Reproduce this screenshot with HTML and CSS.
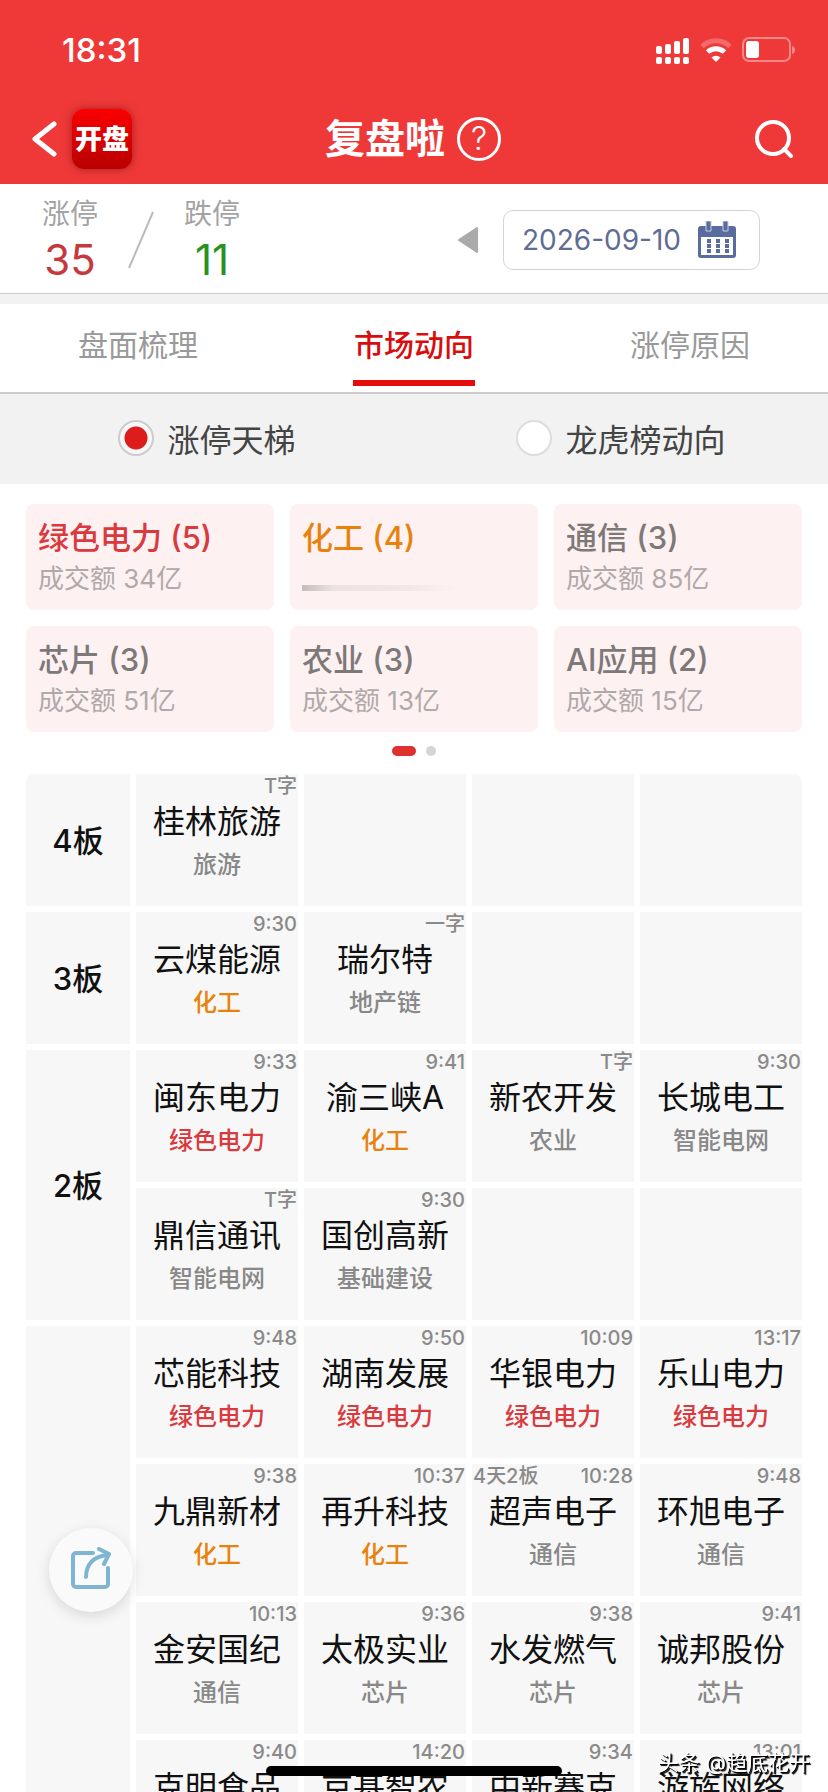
FILE: index.html
```html
<!DOCTYPE html>
<html lang="zh-CN">
<head>
    <meta charset="UTF-8">
    <meta name="viewport" content="width=device-width, initial-scale=1.0">
    <title>复盘啦</title>
    <link rel="stylesheet" href="styles.css">
</head>
<body>

    <header class="top">
        <div class="status-bar">
            <span class="clock">18:31</span>
            <div class="status-icons">
                <svg width="34" height="27" viewBox="0 0 34 27" fill="#fff">
                    <rect x="0" y="9" width="6" height="8" rx="2"/>
                    <rect x="9" y="7" width="6" height="10" rx="2"/>
                    <rect x="18" y="4" width="6" height="13" rx="2"/>
                    <rect x="27" y="1" width="6" height="16" rx="2"/>
                    <rect x="0" y="20" width="6" height="7" rx="2"/>
                    <rect x="9" y="20" width="6" height="7" rx="2"/>
                    <rect x="18" y="20" width="6" height="7" rx="2"/>
                    <rect x="27" y="20" width="6" height="7" rx="2"/>
                </svg>
                <svg width="32" height="25" viewBox="0 0 32 25" fill="none" stroke="#fff" stroke-width="5">
                    <path d="M2 8.500a20 20 0 0 1 28 0" stroke-opacity=".25"/>
                    <path d="M7.500 14a12.500 12.500 0 0 1 17 0"/>
                    <path d="M16 24l-4.500-4.500a7 7 0 0 1 9 0z" fill="#fff" stroke="none"/>
                </svg>
                <svg width="54" height="26" viewBox="0 0 54 26">
                    <rect x="1" y="1" width="47" height="23" rx="6" fill="none" stroke="#fff" stroke-opacity=".4" stroke-width="2"/>
                    <rect x="4" y="4" width="13" height="17" rx="3" fill="#fff"/>
                    <path d="M50 9c4 1 4 7 0 8z" fill="#fff" fill-opacity=".4"/>
                </svg>
            </div>
        </div>
        <div class="nav-bar">
            <div class="nav-left">
                <button class="icon-btn" aria-label="返回">
                    <svg width="26" height="38" viewBox="0 0 26 38" fill="none" stroke="#fff" stroke-width="5" stroke-linecap="round" stroke-linejoin="round">
                        <path d="M22 4L3 19L22 34"/>
                    </svg>
                </button>
                <span class="logo">开盘</span>
            </div>
            <div class="nav-title">
                <h1>复盘啦</h1>
                <button class="help-btn" aria-label="帮助">?</button>
            </div>
            <button class="icon-btn search-btn" aria-label="搜索">
                <svg width="40" height="40" viewBox="0 0 40 40" fill="none" stroke="#fff" stroke-width="4" stroke-linecap="round">
                    <circle cx="19" cy="19" r="16"/>
                    <path d="M30 30l7 7"/>
                </svg>
            </button>
        </div>
    </header>

    <section class="summary">
        <div class="stat up">
            <span class="stat-label">涨停</span>
            <span class="stat-value">35</span>
        </div>
        <svg class="slash" width="26" height="58" viewBox="0 0 26 58" stroke="#bbb" stroke-width="2">
            <path d="M25 1L1 57"/>
        </svg>
        <div class="stat down">
            <span class="stat-label">跌停</span>
            <span class="stat-value">11</span>
        </div>
        <div class="date-picker">
            <button class="icon-btn" aria-label="前一天">
                <svg width="22" height="28" viewBox="0 0 22 28" fill="#aaa" stroke="#aaa" stroke-width="2" stroke-linejoin="round">
                    <path d="M20 2v24L2 14z"/>
                </svg>
            </button>
            <button class="date-btn">
                <span>2026-09-10</span>
                <svg width="40" height="38" viewBox="0 0 40 38">
                    <path d="M4 5h32a3 3 0 0 1 3 3v26a3 3 0 0 1-3 3H4a3 3 0 0 1-3-3V8a3 3 0 0 1 3-3z" fill="#5a6c9e"/>
                    <path d="M4 16h32v18H4z" fill="#fff"/>
                    <path d="M9 0h5v10H9zM26 0h5v10h-5z" fill="#5a6c9e" stroke="#c5cde2" stroke-width="1"/>
                    <path d="M10 18h4v4h-4zM19 18h4v4h-4zM28 18h4v4h-4zM10 23h4v4h-4zM19 23h4v4h-4zM28 23h4v4h-4zM10 28h4v4h-4zM19 28h4v4h-4zM28 28h4v4h-4z" fill="#5a6c9e"/>
                </svg>
            </button>
        </div>
    </section>

    <nav class="tabs">
        <a href="#review" class="tab">盘面梳理</a>
        <a href="#trend" class="tab active">市场动向</a>
        <a href="#reason" class="tab">涨停原因</a>
    </nav>

    <div class="modes">
        <label class="mode"><input type="radio" name="mode" checked>涨停天梯</label>
        <label class="mode"><input type="radio" name="mode">龙虎榜动向</label>
    </div>

    <main class="content">
        <div class="sectors">
            <div class="sector red"><h2>绿色电力 (5)</h2><p>成交额 34亿</p></div>
            <div class="sector orange"><h2>化工 (4)</h2><div class="smudge"></div></div>
            <div class="sector"><h2>通信 (3)</h2><p>成交额 85亿</p></div>
            <div class="sector"><h2>芯片 (3)</h2><p>成交额 51亿</p></div>
            <div class="sector"><h2>农业 (3)</h2><p>成交额 13亿</p></div>
            <div class="sector"><h2>AI应用 (2)</h2><p>成交额 15亿</p></div>
        </div>
        <div class="dots"><span class="dot active"></span><span class="dot"></span></div>

        <table class="ladder">
            <tbody>
                <tr>
                    <th scope="row">4板</th>
                    <td><div class="time">T字</div><div class="name">桂林旅游</div><div class="tag">旅游</div></td>
                    <td></td>
                    <td></td>
                    <td></td>
                </tr>
                <tr>
                    <th scope="row">3板</th>
                    <td><div class="time">9:30</div><div class="name">云煤能源</div><div class="tag orange">化工</div></td>
                    <td><div class="time">一字</div><div class="name">瑞尔特</div><div class="tag">地产链</div></td>
                    <td></td>
                    <td></td>
                </tr>
                <tr>
                    <th scope="row" rowspan="2">2板</th>
                    <td><div class="time">9:33</div><div class="name">闽东电力</div><div class="tag red">绿色电力</div></td>
                    <td><div class="time">9:41</div><div class="name">渝三峡A</div><div class="tag orange">化工</div></td>
                    <td><div class="time">T字</div><div class="name">新农开发</div><div class="tag">农业</div></td>
                    <td><div class="time">9:30</div><div class="name">长城电工</div><div class="tag">智能电网</div></td>
                </tr>
                <tr>
                    <td><div class="time">T字</div><div class="name">鼎信通讯</div><div class="tag">智能电网</div></td>
                    <td><div class="time">9:30</div><div class="name">国创高新</div><div class="tag">基础建设</div></td>
                    <td></td>
                    <td></td>
                </tr>
                <tr>
                    <th scope="row" rowspan="4"></th>
                    <td><div class="time">9:48</div><div class="name">芯能科技</div><div class="tag red">绿色电力</div></td>
                    <td><div class="time">9:50</div><div class="name">湖南发展</div><div class="tag red">绿色电力</div></td>
                    <td><div class="time">10:09</div><div class="name">华银电力</div><div class="tag red">绿色电力</div></td>
                    <td><div class="time">13:17</div><div class="name">乐山电力</div><div class="tag red">绿色电力</div></td>
                </tr>
                <tr>
                    <td><div class="time">9:38</div><div class="name">九鼎新材</div><div class="tag orange">化工</div></td>
                    <td><div class="time">10:37</div><div class="name">再升科技</div><div class="tag orange">化工</div></td>
                    <td><div class="time"><span class="streak">4天2板</span>10:28</div><div class="name">超声电子</div><div class="tag">通信</div></td>
                    <td><div class="time">9:48</div><div class="name">环旭电子</div><div class="tag">通信</div></td>
                </tr>
                <tr>
                    <td><div class="time">10:13</div><div class="name">金安国纪</div><div class="tag">通信</div></td>
                    <td><div class="time">9:36</div><div class="name">太极实业</div><div class="tag">芯片</div></td>
                    <td><div class="time">9:38</div><div class="name">水发燃气</div><div class="tag">芯片</div></td>
                    <td><div class="time">9:41</div><div class="name">诚邦股份</div><div class="tag">芯片</div></td>
                </tr>
                <tr>
                    <td><div class="time">9:40</div><div class="name">克明食品</div></td>
                    <td><div class="time">14:20</div><div class="name">京基智农</div></td>
                    <td><div class="time">9:34</div><div class="name">中新赛克</div></td>
                    <td><div class="time">13:01</div><div class="name">游族网络</div></td>
                </tr>
            </tbody>
        </table>
    </main>

    <button class="share-btn" aria-label="分享">
        <svg width="40" height="42" viewBox="0 0 40 42" fill="none" stroke="#7fb5d2" stroke-width="4" stroke-linecap="round" stroke-linejoin="round">
            <path d="M22 6H5a3 3 0 0 0-3 3v28a3 3 0 0 0 3 3h29a3 3 0 0 0 3-3V21"/>
            <path d="M15 30C15 18 22 9 37 8"/>
            <path d="M28 2l10 5l-5 10"/>
        </svg>
    </button>
    <div class="watermark">头条 @趋底花开</div>
    <div class="home-indicator"></div>

</body>
</html>
```

FILE: styles.css
```css
* {
    box-sizing: border-box;
}

body {
    margin: 0;
    height: 100vh;
    display: flex;
    flex-direction: column;
    overflow: hidden;
    background-color: #fff;
    color: #111;
    font-family: Inter, "Noto Sans CJK SC", sans-serif;
}

h1, h2, p {
    margin: 0;
}

button {
    font-family: inherit;
    cursor: pointer;
}

.icon-btn {
    display: flex;
    padding: 0;
    border: none;
    background: none;
}

.red {
    color: #d93a3e;
}

.orange {
    color: #e8820c;
}

/* Header */
.top {
    flex: none;
    background-color: #ef3939;
    color: #fff;
}

.status-bar {
    display: flex;
    justify-content: space-between;
    align-items: center;
    height: 100px;
    padding: 0 32px 0 62px;
}

.clock {
    font-size: 33px;
    font-weight: 500;
}

.status-icons {
    display: flex;
    align-items: center;
    gap: 10px;
}

.nav-bar {
    display: grid;
    grid-template-columns: 1fr auto 1fr;
    align-items: center;
    height: 84px;
    padding: 0 34px 6px 32px;
}

.nav-left {
    display: flex;
    align-items: center;
    gap: 14px;
}

.logo {
    width: 60px;
    height: 60px;
    border-radius: 12px;
    background: linear-gradient(#fb0000, #b80000);
    box-shadow: 0 0 8px rgba(100, 0, 0, 0.5);
    font-size: 27px;
    font-weight: 900;
    line-height: 62px;
    text-align: center;
}

.nav-title {
    display: flex;
    align-items: center;
    gap: 12px;
}

.nav-title h1 {
    font-size: 40px;
    font-weight: 600;
    line-height: 60px;
}

.help-btn {
    width: 44px;
    height: 44px;
    padding: 0;
    border: 3px solid #fff;
    border-radius: 50%;
    background: none;
    color: #fff;
    font-size: 32px;
    font-weight: 300;
    line-height: 38px;
}

.search-btn {
    justify-self: end;
}

/* Limit up / down numbers and date */
.summary {
    flex: none;
    display: flex;
    align-items: center;
    height: 120px;
    padding: 2px 68px 0 42px;
    border-bottom: 10px solid #f2f2f2;
    box-shadow: inset 0 -1px #ccc;
}

.stat {
    display: flex;
    flex-direction: column;
    align-items: center;
}

.stat-label {
    color: #a3a3a3;
    font-size: 28px;
    line-height: 40px;
}

.stat-value {
    font-size: 42px;
    line-height: 52px;
}

.up .stat-value {
    color: #c5383c;
}

.down .stat-value {
    color: #28921e;
}

.slash {
    margin: 0 30px;
}

.date-picker {
    display: flex;
    align-items: center;
    gap: 24px;
    margin-left: auto;
}

.date-btn {
    display: flex;
    align-items: center;
    gap: 16px;
    height: 60px;
    padding: 0 22px 0 18px;
    border: 1px solid #d5d5d5;
    border-radius: 10px;
    background-color: #fff;
    color: #5f6c93;
    font-size: 28px;
}

/* Tabs */
.tabs {
    flex: none;
    display: flex;
    height: 90px;
    border-bottom: 2px solid #ccc;
}

.tab {
    flex: 1;
    display: flex;
    flex-direction: column;
    align-items: center;
    color: #999;
    font-size: 30px;
    line-height: 76px;
    padding-top: 3px;
    text-decoration: none;
}

.tab.active {
    color: #d90d0d;
    font-weight: 500;
}

.tab.active::after {
    content: "";
    width: 122px;
    height: 6px;
    margin-top: -3px;
    background-color: #e60c0c;
}

/* Radio switch */
.modes {
    flex: none;
    display: flex;
    height: 90px;
    background-color: #f2f2f2;
}

.mode {
    flex: 1;
    display: flex;
    justify-content: center;
    align-items: center;
    gap: 13px;
    padding-bottom: 2px;
    color: #444;
    font-size: 32px;
}

.mode input {
    appearance: none;
    width: 36px;
    height: 36px;
    margin: 0;
    border: 2px solid #ddd;
    border-radius: 50%;
    background-color: #fff;
}

.mode input:checked {
    border-color: #ccc;
    background: radial-gradient(circle, #dd1c1c 11px, #f8f8f8 12px);
}

/* Sector cards */
.content {
    flex: 1;
    min-height: 0;
    overflow-y: auto;
    scrollbar-width: none;
    padding: 20px 20px 0;
}

.sectors {
    display: grid;
    grid-template-columns: repeat(3, 1fr);
    gap: 16px;
    padding: 0 6px;
}

.sector {
    height: 106px;
    padding: 12px;
    border-radius: 8px;
    background-color: #fdf1f1;
}

.sector h2 {
    font-size: 31px;
    font-weight: 500;
    line-height: 44px;
}

.sector:not(.red):not(.orange) h2 {
    color: #7d7979;
}

.sector p {
    color: #b0a9a9;
    font-size: 26px;
    line-height: 38px;
}

.smudge {
    width: 154px;
    height: 6px;
    margin-top: 25px;
    background: linear-gradient(90deg, #c4bcbc, #ece2e2 20%, #f3e8e8 70%, #fdf1f1);
}

.dots {
    display: flex;
    justify-content: center;
    gap: 10px;
    padding: 14px 0 12px;
}

.dot {
    width: 10px;
    height: 10px;
    border-radius: 5px;
    background-color: #d5d5d5;
}

.dot.active {
    width: 24px;
    background-color: #e03030;
}

/* Limit-up ladder */
.ladder {
    width: 100%;
    table-layout: fixed;
    border-spacing: 6px;
}

.ladder th,
.ladder td {
    height: 132px;
    padding: 0;
    background-color: #f7f7f7;
}

.ladder th {
    width: 104px;
    padding-bottom: 4px;
    font-size: 31px;
    font-weight: 500;
}

.ladder td {
    vertical-align: top;
    text-align: center;
}

.ladder tr:first-child th {
    border-top-left-radius: 8px;
}

.ladder tr:first-child td:last-child {
    border-top-right-radius: 8px;
}

.time {
    display: flex;
    justify-content: flex-end;
    padding: 0 1px;
    color: #8a8a8a;
    font-size: 20px;
    font-weight: 500;
    line-height: 24px;
}

.streak {
    margin-right: auto;
}

.name {
    font-size: 32px;
    line-height: 48px;
}

.tag {
    font-size: 24px;
    font-weight: 500;
    line-height: 38px;
}

.tag:not(.red):not(.orange) {
    color: #888;
}

/* Floating parts */
.share-btn {
    position: fixed;
    left: 49px;
    bottom: 180px;
    display: flex;
    justify-content: center;
    align-items: center;
    width: 84px;
    height: 84px;
    padding: 0 0 4px;
    border: none;
    border-radius: 50%;
    background-color: #fafafa;
    box-shadow: 0 4px 14px rgba(0, 0, 0, 0.13);
}

.watermark {
    position: fixed;
    right: 18px;
    bottom: 13px;
    color: #fff;
    font-size: 21px;
    line-height: 32px;
    text-shadow: 1px 1px 0 #000, 2px 2px 1px #000;
}

.home-indicator {
    position: fixed;
    left: 50%;
    bottom: 16px;
    width: 296px;
    height: 10px;
    margin-left: -148px;
    border-radius: 5px;
    background-color: #000;
}
```
